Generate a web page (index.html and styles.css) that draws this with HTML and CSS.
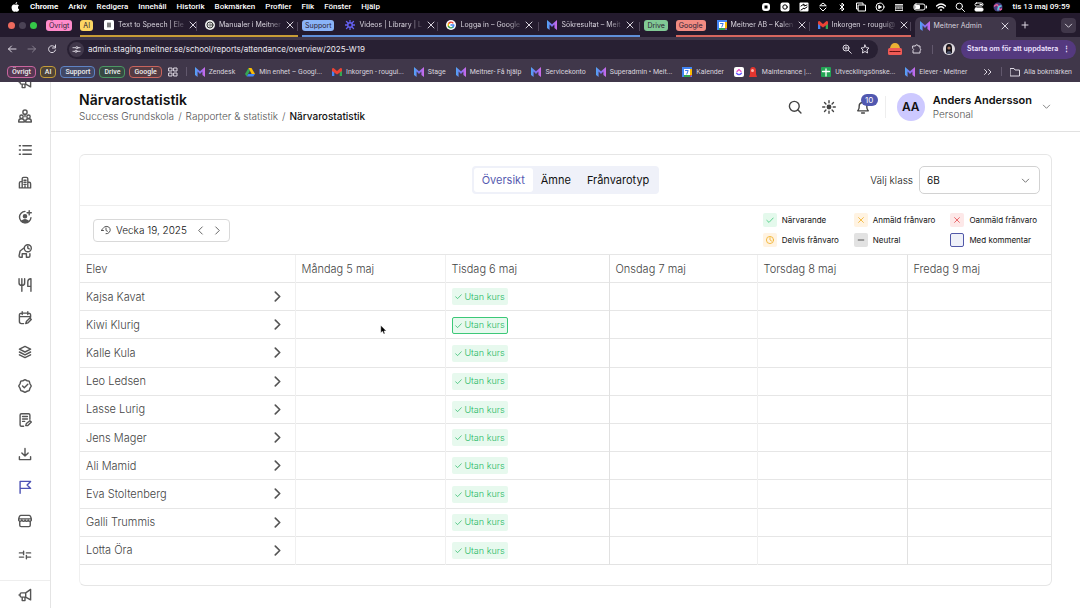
FILE: index.html
```html
<!DOCTYPE html>
<html lang="sv">
<head>
<meta charset="utf-8">
<title>Meitner Admin</title>
<link rel="stylesheet" href="styles.css">
</head>
<body>
<svg class="defs" aria-hidden="true">
  <defs>
    <linearGradient id="mg" x1="0" x2="1" y1="0" y2="0"><stop offset="0" stop-color="#4fa8f5"/><stop offset=".5" stop-color="#7d6cf0"/><stop offset="1" stop-color="#d06be8"/></linearGradient>
    <symbol id="m" viewBox="0 0 10 10"><path fill="url(#mg)" d="M0 0l5 4.300L10 0v10L7.400 8V4.600L5 7 2.600 4.600V10L0 8z"/></symbol>
    <symbol id="x" viewBox="0 0 10 10"><path d="M2 2l6 6M8 2L2 8"/></symbol>
    <symbol id="gmail" viewBox="0 0 10 10"><path fill="#4285f4" d="M0 2h2.300v7H0z"/><path fill="#34a853" d="M7.700 2H10v7H7.700z"/><path fill="#ea4335" d="M0 1.500l1.500-.5L5 4l3.500-3 1.500.5V4L5 7.500 0 4z"/></symbol>
    <symbol id="cal" viewBox="0 0 10 10"><path fill="#4285f4" d="M0 0h10v10H0z"/><path fill="#fbbc04" d="M8 2h2v6H8z"/><path fill="#34a853" d="M2 8h6v2H2z"/><path fill="#ea4335" d="M8 8h2L8 10z"/><path fill="#fff" d="M2 2h6v6H2z"/><path fill="none" stroke="#3b78e7" d="M3.500 3.500h2.700L4.800 7"/></symbol>
    <symbol id="right" viewBox="0 0 10 10"><path d="M3 1l4 4-4 4"/></symbol>
    <symbol id="down" viewBox="0 0 10 10"><path d="M1.500 3.500L5 7l3.500-3.500"/></symbol>
    <symbol id="check" viewBox="0 0 10 10"><path d="M1 5.500L3.800 8 9 2.500"/></symbol>
    <symbol id="horn" viewBox="0 0 20 20"><path d="M18 2v15l-7-4H5a2 2 0 01-2-2V9a2 2 0 012-2h6zM11 7v6M6 13v5h4v-5M3 10H1.500"/></symbol>
  </defs>
</svg>

<header class="browser">
  <nav class="menubar" aria-label="Menyrad">
    <svg class="apple" viewBox="0 0 10 12"><path fill="#fff" d="M7 0C5.700.2 5 1.300 5 2.500 6.200 2.500 7 1.300 7 0zM5 3.200C4 2.900 3 2.600 2 3.200c-3 1.800-1.500 7 .5 8.300.9.500 1.500-.2 2.500-.2s1.600.7 2.500.2C8.500 11 9 10 9.400 8.900 7.500 8 7.600 5.200 9.200 4.300 8 2.500 6 2.900 5 3.200z"/></svg>
    <b>Chrome</b><span>Arkiv</span><span>Redigera</span><span>Innehåll</span><span>Historik</span><span>Bokmärken</span><span>Profiler</span><span>Flik</span><span>Fönster</span><span>Hjälp</span>
    <div class="status">
      <svg viewBox="0 0 10 10"><rect x="1" y="1" width="8" height="8" rx="3" fill="#fff"/><rect x="3.500" y="3.500" width="3" height="3" fill="#000"/></svg>
      <svg viewBox="0 0 10 10"><rect x=".5" y=".5" width="9" height="9" rx="2" fill="#fff"/><circle cx="5" cy="5" r="2.200" fill="none" stroke="#000"/><circle cx="5" cy="5" r=".8"/></svg>
      <svg viewBox="0 0 10 10"><rect x=".5" y=".5" width="9" height="9" rx="1" fill="#fff"/><path d="M2 4l3-2v2l3-1M2 8l3-2v1l3-2" fill="none" stroke="#000"/></svg>
      <svg class="ln" viewBox="0 0 10 10"><path d="M2 3.500l3-2.500 3 2.500zM2 6l3 3 3-3"/></svg>
      <svg class="ln" viewBox="0 0 10 10"><path d="M3 3l4 4-2 2V1l2 2-4 4"/></svg>
      <svg class="ln" viewBox="0 0 10 10"><path d="M2 7H.5V1H7v1.500M2.500 3h7v6h-7z"/></svg>
      <svg class="ln" viewBox="0 0 10 10"><circle cx="5" cy="5" r="4"/><path fill="#fff" d="M4 3.500L6.500 5 4 6.500z"/></svg>
      <svg viewBox="0 0 10 10"><path fill="#ddd" d="M1 2h8v7H1z"/><path stroke="#222" d="M1 4h8M2 6h2M5 6h3M2 7.500h6"/></svg>
      <svg class="wide ln" viewBox="0 0 14 10"><rect x="1" y="2" width="11" height="6" rx="2"/><path fill="#fff" d="M2.500 3.500h4v3h-4zM13.500 4v2"/></svg>
      <svg class="ln" viewBox="0 0 10 10"><path d="M.5 4Q5 0 9.500 4M2.300 6Q5 3.500 7.700 6M4.500 8h1" stroke-width="1.400"/></svg>
      <svg class="ln" viewBox="0 0 10 10"><circle cx="4.300" cy="4.300" r="3.200"/><path d="M6.700 6.700L9.500 9.500"/></svg>
      <svg class="ln" viewBox="0 0 10 10"><rect x="1" y="1" width="8" height="3" rx="1.500"/><rect x="1" y="6" width="8" height="3" rx="1" fill="#fff"/><path d="M6 2.500h2"/></svg>
      <svg viewBox="0 0 10 10"><circle cx="5" cy="5" r="4.500" fill="#4b3d80"/><path d="M1.500 4q3-3 4 1t3 2" stroke="#e9609b" stroke-width="1.500" fill="none"/><path d="M5 8q0-4 3-4" stroke="#5fd3ea" stroke-width="1.500" fill="none"/></svg>
    </div>
    <time>tis 13 maj 09:59</time>
  </nav>

  <div class="tabstrip">
    <div class="lights"><i class="red"></i><i class="grey"></i><i class="green"></i></div>
    <button class="chip pink">Övrigt</button>
    <div class="group yellowline">
      <button class="chip yellow">AI</button>
      <div class="tab"><svg viewBox="0 0 10 10"><rect width="10" height="10" rx="1.500" fill="#fff"/><path stroke="#000" d="M4 3v4M6 3v4"/></svg><span>Text to Speech | Ele</span><button aria-label="Stäng"><svg><use href="#x"/></svg></button></div>
      <div class="tab"><svg viewBox="0 0 10 10"><circle cx="5" cy="5" r="5" fill="#eee"/><circle cx="5" cy="5" r="3" fill="none" stroke="#333"/><circle cx="5" cy="5" r="1.200" fill="none" stroke="#333" stroke-width=".6"/></svg><span>Manualer i Meitner</span><button aria-label="Stäng"><svg><use href="#x"/></svg></button></div>
    </div>
    <div class="group blueline">
      <button class="chip blue">Support</button>
      <div class="tab"><svg viewBox="0 0 10 10"><path stroke="#6460f0" stroke-width="1.300" d="M5 0v10M0 5h10M1.500 1.500l7 7M8.500 1.500l-7 7"/><circle cx="5" cy="5" r="3" fill="#6460f0"/><circle cx="5" cy="5" r="1.500" fill="#241b2e"/></svg><span>Videos | Library | L</span><button aria-label="Stäng"><svg><use href="#x"/></svg></button></div>
      <div class="tab"><svg viewBox="0 0 10 10"><circle cx="5" cy="5" r="5" fill="#fff"/><g fill="none" stroke-width="1.400"><path stroke="#ea4335" d="M2.500 3.700A2.900 2.900 0 017 2.900"/><path stroke="#fbbc04" d="M2.500 3.700a3 3 0 000 2.700"/><path stroke="#34a853" d="M2.500 6.400A2.900 2.900 0 007 7.100"/><path stroke="#4285f4" d="M7 7.100A3 3 0 007.900 5H5"/></g></svg><span>Logga in – Google</span><button aria-label="Stäng"><svg><use href="#x"/></svg></button></div>
      <div class="tab"><svg><use href="#m"/></svg><span>Sökresultat – Meit</span><button aria-label="Stäng"><svg><use href="#x"/></svg></button></div>
    </div>
    <button class="chip mint">Drive</button>
    <div class="group redline">
      <button class="chip coral">Google</button>
      <div class="tab"><svg><use href="#cal"/></svg><span>Meitner AB – Kalen</span><button aria-label="Stäng"><svg><use href="#x"/></svg></button></div>
      <div class="tab"><svg><use href="#gmail"/></svg><span>Inkorgen - rougui@</span><button aria-label="Stäng"><svg><use href="#x"/></svg></button></div>
    </div>
    <div class="tab active"><svg><use href="#m"/></svg><span>Meitner Admin</span><button aria-label="Stäng"><svg><use href="#x"/></svg></button></div>
    <button class="plus" aria-label="Ny flik"><svg class="ln" viewBox="0 0 10 10"><path d="M5 2v6M2 5h6"/></svg></button>
    <button class="more" aria-label="Sök bland flikar"><svg class="ln"><use href="#down"/></svg></button>
  </div>

  <div class="toolbar">
    <button aria-label="Bakåt"><svg class="ln" viewBox="0 0 10 10"><path d="M9 5H1.500M4.500 2l-3 3 3 3"/></svg></button>
    <button class="dim" aria-label="Framåt"><svg class="ln" viewBox="0 0 10 10"><path d="M1 5h7.500M5.500 2l3 3-3 3"/></svg></button>
    <button aria-label="Läs in igen"><svg class="ln" viewBox="0 0 10 10"><path d="M8 3.200A3.500 3.500 0 108.500 6M8.500 1v3h-3"/></svg></button>
    <div class="omnibox">
      <span class="site"><svg class="ln" viewBox="0 0 10 10"><path d="M1 3h3M7 3h2M1 7h2M6 7h3"/><circle cx="5.500" cy="3" r="1.200"/><circle cx="4.500" cy="7" r="1.200"/></svg></span>
      <input type="text" aria-label="Adress" value="admin.staging.meitner.se/school/reports/attendance/overview/2025-W19">
      <svg class="ln" viewBox="0 0 10 10"><circle cx="4" cy="4" r="3"/><path d="M6.300 6.300L9.300 9.300M2.700 4h2.600M4 2.700v2.600"/></svg>
      <svg class="ln" viewBox="0 0 10 10"><path d="M5 1l1.200 2.700 2.800.3L7 6l.6 3L5 7.500 2.400 9 3 6 1 4l2.800-.3z"/></svg>
    </div>
    <svg class="ext" viewBox="0 0 14 13"><path fill="#edb234" d="M2 5q1-5 5-5t5 5z"/><rect y="5" width="14" height="7" rx="1.500" fill="#ef5a55"/><path stroke="#611" stroke-width="1.200" stroke-dasharray="2 .8" d="M2 8.500h10"/></svg>
    <svg class="ln puzzle" viewBox="0 0 10 10"><path d="M1 2h2.500a1.200 1.200 0 012.500 0H8v2.500a1.200 1.200 0 010 2.200V9H1V6.500a1.200 1.200 0 000-2z"/></svg>
    <i class="sep"></i>
    <svg class="face" viewBox="0 0 12 12"><circle cx="6" cy="6" r="6" fill="#ddd9de"/><path fill="#17131a" d="M3 10V5q0-4 3-4t3 4v5z"/><circle cx="6" cy="5" r="1.600" fill="#a87b63"/><path fill="#4a5068" d="M3.500 11q0-3 2.500-3t2.500 3z"/></svg>
    <button class="restart">Starta om för att uppdatera <span>⋮</span></button>
  </div>

  <nav class="bookmarks" aria-label="Bokmärken">
    <button class="ochip opink">Övrigt</button><button class="ochip oyellow">AI</button><button class="ochip oblue">Support</button><button class="ochip ogreen">Drive</button><button class="ochip ored">Google</button>
    <svg class="ln" viewBox="0 0 10 10"><path d="M1 1h3v3H1zM6 1h3v3H6zM1 6h3v3H1zM6 6h3v3H6z"/></svg>
    <i class="sep"></i>
    <a href="#"><svg><use href="#m"/></svg>Zendesk</a>
    <a href="#"><svg viewBox="0 0 10 10"><path fill="#34a853" d="M3.500 1L0 7l1.700 2.500L5 3.500z"/><path fill="#fbbc04" d="M3.500 1h3L10 7H6.700z"/><path fill="#4285f4" d="M3.300 7H10L8.300 9.500H1.700z"/></svg>Min enhet – Googl...</a>
    <a href="#"><svg><use href="#gmail"/></svg>Inkorgen - rougui...</a>
    <a href="#"><svg><use href="#m"/></svg>Stage</a>
    <a href="#"><svg><use href="#m"/></svg>Meitner- Få hjälp</a>
    <a href="#"><svg><use href="#m"/></svg>Servicekonto</a>
    <a href="#"><svg><use href="#m"/></svg>Superadmin • Meit...</a>
    <a href="#"><svg><use href="#cal"/></svg>Kalender</a>
    <a href="#"><svg viewBox="0 0 10 10"><rect width="10" height="10" rx="2" fill="#fff"/><path d="M3 4.500l2-2 2 2" stroke="#e952c8" fill="none" stroke-width="1.300"/><path d="M2.500 6.300q2.500 2.700 5 0" stroke="#6b5cff" fill="none" stroke-width="1.300"/></svg><svg viewBox="0 0 10 10"><path fill="#e3352f" d="M2 7V4q0-4 3-4t3 4v3l1 3H1z"/><circle cx="4.500" cy="3.500" r="1.500" fill="#ffb3a8"/></svg>Maintenance |...</a>
    <a href="#"><svg viewBox="0 0 10 10"><rect width="10" height="10" rx="1" fill="#23a455"/><path stroke="#fff" stroke-width="1.300" d="M5 2v7M1.500 4.500h7"/></svg>Utvecklingsönske...</a>
    <a href="#"><svg><use href="#m"/></svg>Elever - Meitner</a>
    <button class="all" aria-label="Fler bokmärken"><svg class="ln" viewBox="0 0 10 10"><path d="M1.500 2.500L4 5 1.500 7.500M5.500 2.500L8 5 5.500 7.500"/></svg></button>
    <i class="sep"></i>
    <a href="#"><svg class="ln" viewBox="0 0 10 10"><path d="M.5 1.500H4l1 1.500h4.500v6h-9z"/></svg>Alla bokmärken</a>
  </nav>
</header>

<div class="app">
  <aside class="side">
    <nav class="icons" aria-label="Meny">
      <a href="#" aria-label="Anslag"><svg><use href="#horn"/></svg></a>
      <a href="#" aria-label="Grupper"><svg viewBox="0 0 20 20"><circle cx="10" cy="4.500" r="3"/><circle cx="5" cy="11" r="2.400"/><circle cx="15" cy="11" r="2.400"/><path d="M1 18.500v-1q0-3.500 4-3.500t4 3.500v1H1zM11 18.500v-1q0-3.500 4-3.500t4 3.500v1h-8zM10 8v3"/></svg></a>
      <a href="#" aria-label="Lista"><svg viewBox="0 0 20 20"><path d="M7 4h12M7 10h12M7 16h12M2 4h1.500M2 10h1.500M2 16h1.500"/></svg></a>
      <a href="#" aria-label="Skola"><svg viewBox="0 0 20 20"><path d="M6 17V4q0-2 2-2h4q2 0 2 2v13M6 8H4q-2 0-2 2v7h16v-6q0-2-2-2h-2M8.500 6h3M8.500 9h3M8.500 12h3M10 14v3"/></svg></a>
      <a href="#" aria-label="Ny person"><svg viewBox="0 0 20 20"><path d="M10 2a8.200 8.200 0 108.500 9M16 1v6M13 4h6"/><circle cx="10" cy="9" r="2.300" fill="#555"/><path fill="#555" d="M5 16q5-4 10 0-5 4-10 0z"/></svg></a>
      <a href="#" aria-label="Fritids"><svg viewBox="0 0 20 20"><path d="M8 6L3 10l-1.500 7q0 2 2 2H6v-5h6v5h3q2 0 2-2v-3"/><circle cx="14" cy="6" r="5"/><path d="M14 3v3l2 1"/></svg></a>
      <a href="#" aria-label="Måltider"><svg viewBox="0 0 20 20"><path d="M1.500 1v6q0 3.500 4 3.500t4-3.500V1M5.500 1v18M18.500 19V1q-4.500 0-4.500 5v6h4"/></svg></a>
      <a href="#" aria-label="Schema"><svg viewBox="0 0 20 20"><path d="M8 18H5q-3 0-3-3V6q0-3 3-3h10q3 0 3 3v3M2 8h16M6 1v4M14 1v4M11 18l1-3 5-5 2 2-5 5z"/></svg></a>
      <a href="#" aria-label="Kurser"><svg viewBox="0 0 20 20"><path d="M10 2l8 4-8 4-8-4zM2 10l8 4 8-4M2 14l8 4 8-4"/></svg></a>
      <a href="#" aria-label="Godkänt"><svg viewBox="0 0 20 20"><path d="M10 1l3 1.500 3 .5 1 3.500L19 10l-2 3.500-1 3-3 1-3 1.500-3-1.500-3-1-1-3L1 10l2-3.500L4 3l3-.5zM6.500 10l2.500 2.500L14 7.500"/></svg></a>
      <a href="#" aria-label="Anteckningar"><svg viewBox="0 0 20 20"><path d="M8 19H5q-2 0-2-2V3q0-2 2-2h10q2 0 2 2v6M6.500 5h7M6.500 8.500h7M6.500 12h3M11 18l1-3 5-4 2 2-5 5z"/></svg></a>
      <a href="#" aria-label="Ladda ner"><svg viewBox="0 0 20 20"><path d="M10 2v11M5.500 8.500L10 13l4.500-4.500M2 14v4h16v-4"/></svg></a>
      <a href="#" aria-label="Rapporter" class="on"><svg viewBox="0 0 20 20"><path d="M3 19V2h15l-5 5 5 5H3"/></svg></a>
      <a href="#" aria-label="Butik"><svg viewBox="0 0 20 20"><path d="M4 2h12q2 0 3 5v2q-2 3-4.500 0-2 3-4.500 0-2 3-4.500 0Q3 12 1 9V7q1-5 3-5zM1 7h18M2.500 11v5q0 2 2 2h11q2 0 2-2v-5"/></svg></a>
      <a href="#" aria-label="Inställningar"><svg viewBox="0 0 20 20"><path d="M2 7h6M12 7h6M2 13h6M12 13h6M8 4.500v5M12 10.500v5"/></svg></a>
    </nav>
    <a href="#" class="foot" aria-label="Nyheter"><svg><use href="#horn"/></svg></a>
  </aside>

  <div class="content">
    <header class="top">
      <div class="heading">
        <h1>Närvarostatistik</h1>
        <nav class="crumbs" aria-label="Brödsmulor"><a href="#">Success Grundskola</a><i>/</i><a href="#">Rapporter &amp; statistik</a><i>/</i><b>Närvarostatistik</b></nav>
      </div>
      <div class="actions">
        <button aria-label="Sök"><svg viewBox="0 0 20 20"><circle cx="9" cy="9" r="7"/><path d="M14 14l4.500 4.500"/></svg></button>
        <button aria-label="Ljust läge"><svg viewBox="0 0 20 20"><circle cx="10" cy="10" r="2.500" fill="#444"/><path d="M10 1v3M10 16v3M1 10h3M16 10h3M3.600 3.600l2 2M14.400 14.400l2 2M16.400 3.600l-2 2M5.600 14.400l-2 2"/></svg></button>
        <button class="bell" aria-label="Aviseringar"><svg viewBox="0 0 20 20"><path d="M2.500 15.500q2-2 2-5V9q0-5.500 5.500-5.500T15.500 9v1.500q0 3 2 5zM8 18.500h4"/></svg><em>10</em></button>
      </div>
      <button class="user"><span class="avatar">AA</span><span class="who"><b>Anders Andersson</b><small>Personal</small></span><svg><use href="#down"/></svg></button>
    </header>

    <main>
      <section class="card">
        <div class="filters">
          <div></div>
          <div class="segments" role="tablist"><button role="tab" class="sel" aria-selected="true">Översikt</button><button role="tab">Ämne</button><button role="tab">Frånvarotyp</button></div>
          <div class="klass"><label for="klass">Välj klass</label><span class="pick"><select id="klass"><option>6B</option></select><svg><use href="#down"/></svg></span></div>
        </div>
        <div class="period">
          <div class="week">
            <svg viewBox="0 0 20 20"><path d="M5 5.500A7.500 7.500 0 1110 17.500M10 6v5l3 1.500M1 11h4M3 7.500L1 11"/></svg>
            <span>Vecka 19, 2025</span>
            <button class="flip" aria-label="Föregående vecka"><svg><use href="#right"/></svg></button>
            <button aria-label="Nästa vecka"><svg><use href="#right"/></svg></button>
          </div>
          <ul class="legend">
            <li><i class="ok"><svg><use href="#check"/></svg></i>Närvarande</li>
            <li><i class="warn"><svg><use href="#x"/></svg></i>Anmäld frånvaro</li>
            <li><i class="bad"><svg><use href="#x"/></svg></i>Oanmäld frånvaro</li>
            <li><i class="warn"><svg viewBox="0 0 10 10"><circle cx="5" cy="5" r="4.500"/><path d="M5 2v3l2 1.300"/></svg></i>Delvis frånvaro</li>
            <li><i class="neutral"><svg viewBox="0 0 10 10"><path d="M1.500 5h7"/></svg></i>Neutral</li>
            <li><i class="note"></i>Med kommentar</li>
          </ul>
        </div>
        <table>
          <colgroup><col class="c1"><col class="c2"><col class="c3"><col class="c4"><col class="c5"><col class="c6"></colgroup>
          <thead><tr><th>Elev</th><th>Måndag 5 maj</th><th>Tisdag 6 maj</th><th>Onsdag 7 maj</th><th>Torsdag 8 maj</th><th>Fredag 9 maj</th></tr></thead>
          <tbody>
            <tr><td><a href="#">Kajsa Kavat<svg><use href="#right"/></svg></a></td><td></td><td><span class="tag"><svg><use href="#check"/></svg>Utan kurs</span></td><td></td><td></td><td></td></tr>
            <tr><td><a href="#">Kiwi Klurig<svg><use href="#right"/></svg></a></td><td></td><td><span class="tag noted"><svg><use href="#check"/></svg>Utan kurs</span></td><td></td><td></td><td></td></tr>
            <tr><td><a href="#">Kalle Kula<svg><use href="#right"/></svg></a></td><td></td><td><span class="tag"><svg><use href="#check"/></svg>Utan kurs</span></td><td></td><td></td><td></td></tr>
            <tr><td><a href="#">Leo Ledsen<svg><use href="#right"/></svg></a></td><td></td><td><span class="tag"><svg><use href="#check"/></svg>Utan kurs</span></td><td></td><td></td><td></td></tr>
            <tr><td><a href="#">Lasse Lurig<svg><use href="#right"/></svg></a></td><td></td><td><span class="tag"><svg><use href="#check"/></svg>Utan kurs</span></td><td></td><td></td><td></td></tr>
            <tr><td><a href="#">Jens Mager<svg><use href="#right"/></svg></a></td><td></td><td><span class="tag"><svg><use href="#check"/></svg>Utan kurs</span></td><td></td><td></td><td></td></tr>
            <tr><td><a href="#">Ali Mamid<svg><use href="#right"/></svg></a></td><td></td><td><span class="tag"><svg><use href="#check"/></svg>Utan kurs</span></td><td></td><td></td><td></td></tr>
            <tr><td><a href="#">Eva Stoltenberg<svg><use href="#right"/></svg></a></td><td></td><td><span class="tag"><svg><use href="#check"/></svg>Utan kurs</span></td><td></td><td></td><td></td></tr>
            <tr><td><a href="#">Galli Trummis<svg><use href="#right"/></svg></a></td><td></td><td><span class="tag"><svg><use href="#check"/></svg>Utan kurs</span></td><td></td><td></td><td></td></tr>
            <tr><td><a href="#">Lotta Öra<svg><use href="#right"/></svg></a></td><td></td><td><span class="tag"><svg><use href="#check"/></svg>Utan kurs</span></td><td></td><td></td><td></td></tr>
          </tbody>
        </table>
      </section>
    </main>
  </div>
</div>
<svg class="pointer" viewBox="0 0 7 11"><path d="M.5.5v8l2-1.500 1.200 3 1.500-.6L4 6.500h2.500z" fill="#000" stroke="#fff" stroke-width=".5"/></svg>
</body>
</html>
```
FILE: styles.css
```css
* { box-sizing: border-box; }
body { margin: 0; height: 100vh; display: flex; flex-direction: column; overflow: hidden; background: #fff; color: #111; font: 11px/16px Inter, "Liberation Sans", sans-serif; }
button, input, select { font: inherit; color: inherit; border: 0; background: none; padding: 0; margin: 0; }
a { color: inherit; text-decoration: none; }
i, em { font-style: normal; }
svg { fill: none; stroke-linecap: round; stroke-linejoin: round; flex: none; display: block; }
.defs { width: 0; height: 0; position: absolute; }

/* Browser frame */
.browser { flex: none; font-size: 7px; line-height: 12px; color: #d9d4de; background: #40374a; }
.browser svg { width: 10px; height: 10px; }
.ln { stroke: #ddd8e2; stroke-width: 1; }
.sep { width: 1px; height: 9px; background: #62586d; }

.menubar { height: 13px; background: #000; color: #fff; display: flex; align-items: center; gap: 10px; padding: 0 10px 0 11px; font-family: Roboto, sans-serif; font-size: 8px; font-weight: 500; white-space: nowrap; }
.menubar b { font-weight: 700; }
.menubar .apple { width: 9px; }
.status { margin-left: auto; display: flex; gap: 9px; }
.browser .status .wide { width: 14px; }
.status .ln { stroke: #fff; }

.tabstrip { height: 24px; background: #241b2e; display: flex; align-items: stretch; padding: 0 4px 0 8px; }
.lights { display: flex; gap: 4px; align-items: center; margin-right: 9px; }
.lights i { width: 7px; height: 7px; border-radius: 50%; }
.lights .red { background: #ed6a5e; }
.lights .grey { background: #4b4355; }
.lights .green { background: #35c748; }
.chip { height: 11px; line-height: 11px; align-self: center; padding: 0 3px; border-radius: 3px; color: #2a2032; flex: none; }
.group .chip { margin-right: 3px; }
.pink { background: #ff8bcb; margin-right: 8px; }
.yellow { background: #fdd663; }
.blue { background: #8ab4f8; }
.mint { background: #81c995; margin-right: 8px; }
.coral { background: #f28b82; }
.group { display: flex; flex: 0 1 auto; min-width: 0; border-bottom: 2px solid; padding-top: 2px; margin-right: 4px; }
.yellowline { border-color: #c79c36; }
.blueline { border-color: #5f8fd8; }
.redline { border-color: #d6665e; }
.tab { flex: 0 1 auto; width: 101px; min-width: 0; display: flex; align-items: center; gap: 4px; padding: 0 5px 0 8px; position: relative; }
.tab span { flex: 1; white-space: nowrap; mask-image: linear-gradient(90deg, #000 80%, #0003); }
.tab button { width: 10px; }
.tab button svg { stroke: #d9d4de; }
.tab:not(.active)::after { content: ""; position: absolute; right: 0; top: 7px; height: 9px; width: 1px; background: #4f4559; }
.active { background: #40374a; border-radius: 6px 6px 0 0; margin: 4px 0 0; padding: 0 6px 3px 5px; }
.active span { mask: none; }
.plus { width: 18px; padding: 0 4px; }
.more { align-self: center; width: 15px; height: 15px; border-radius: 4px; background: #40374a; margin-left: auto; padding: 3px; }
.browser .more svg { width: 9px; height: 9px; }

.toolbar { height: 24px; padding: 0 4px 0 7px; display: flex; align-items: center; gap: 10px; }
.toolbar .dim { opacity: .45; }
.omnibox { flex: 1; height: 19px; border-radius: 10px; background: #282033; display: flex; align-items: center; gap: 8px; padding: 0 8px 0 2px; }
.omnibox input { flex: 1; min-width: 0; font-size: 8px; color: #eeebf2; outline: 0; }
.site { width: 15px; height: 15px; border-radius: 50%; background: #40374a; padding: 3px; margin-right: -4px; }
.browser .site svg { width: 9px; height: 9px; }
.browser .ext { width: 14px; height: 13px; }
.browser .face { width: 12px; height: 12px; }
.restart { height: 19px; border-radius: 10px; background: #54397f; color: #efe4ff; font-weight: 600; padding: 0 6px; margin-left: -4px; white-space: nowrap; }
.restart span { margin-left: 3px; }

.bookmarks { height: 21px; display: flex; align-items: center; gap: 10px; padding: 0 8px 0 7px; white-space: nowrap; font-family: Roboto, sans-serif; }
.bookmarks a { display: flex; align-items: center; gap: 4px; }
.bookmarks .sep { margin: 0 -2px; }
.bookmarks .all { margin-left: auto; }
.ochip { height: 12px; line-height: 10px; border: 1px solid; border-radius: 4px; padding: 0 4px; margin-right: -6px; color: #eee; font-weight: 500; }
.ochip + svg { margin-left: 2px; }
.opink { border-color: #c9659f; background: #573753; }
.oyellow { border-color: #c39b39; background: #4f4437; }
.oblue { border-color: #5f83c4; background: #414765; }
.ogreen { border-color: #4c9763; background: #374843; }
.ored { border-color: #c8645d; background: #553b43; }

/* Application */
.app { flex: 1; min-height: 0; display: flex; }
.side { flex: none; width: 51px; border-right: 1px solid #e4e4e4; display: flex; flex-direction: column; overflow: hidden; }
.side svg { width: 14px; height: 14px; stroke: #555; stroke-width: 2; }
.icons { flex: 1; min-height: 0; margin-top: -10px; padding-bottom: 15px; display: flex; flex-direction: column; align-items: center; justify-content: space-between; }
.icons a { height: 20px; display: flex; align-items: center; }
.side .on svg { stroke: #4c52b5; }
.foot { height: 28px; border-top: 1px solid #eee; display: grid; place-items: center; }
.content { flex: 1; min-width: 0; display: flex; flex-direction: column; }

.top { height: 50px; flex: none; border-bottom: 1px solid #e1e1e1; display: flex; align-items: center; padding: 0 29px 0 28px; }
.heading { flex: 1; }
h1 { margin: 0; font-size: 14px; line-height: 18px; font-weight: 600; }
.crumbs { font-size: 10px; line-height: 14px; font-weight: 300; color: #555; display: flex; gap: 4px; }
.crumbs b { color: #111; font-weight: 500; }
.actions { display: flex; gap: 20px; padding-right: 15px; border-right: 1px solid #eee; height: 22px; align-items: center; }
.actions svg { width: 14px; height: 14px; stroke: #444; stroke-width: 2; }
.bell { position: relative; }
.bell em { position: absolute; left: 5px; top: -6px; height: 12px; width: 17px; border-radius: 6px; background: #5158b0; color: #fff; font-size: 8px; line-height: 12px; }
.user { display: flex; align-items: center; text-align: left; margin-left: 11px; }
.avatar { width: 28px; height: 28px; border-radius: 50%; background: #cdc9ff; font-size: 12px; line-height: 28px; font-weight: 600; text-align: center; }
.who { display: flex; flex-direction: column; margin: 0 10px 0 8px; }
.who b { font-size: 11px; line-height: 14px; font-weight: 600; }
.who small { font-size: 10px; line-height: 14px; font-weight: 300; color: #555; }
.user svg { width: 9px; height: 9px; stroke: #777; }

main { padding: 22px 28px; }
.card { border: 1px solid #e6e6e6; border-left-color: #f0f0f0; border-radius: 6px; padding-bottom: 20px; }
.filters { display: grid; grid-template-columns: 1fr auto 1fr; align-items: center; height: 51px; padding: 0 11px; border-bottom: 1px solid #eee; }
.segments { display: flex; background: #eff1f9; border-radius: 4px; padding: 2px; }
.segments button { height: 24px; font-size: 11px; padding: 0 8px; border-radius: 3px; }
.segments .sel { background: #fff; color: #565bb0; }
.klass { display: flex; justify-content: flex-end; align-items: center; gap: 6px; font-size: 10px; font-weight: 300; }
.pick { display: grid; align-items: center; width: 121px; }
.pick > * { grid-area: 1 / 1; }
.pick select { appearance: none; height: 28px; border: 1px solid #d2d2d2; border-radius: 5px; padding: 0 7px; font-size: 10px; font-weight: 400; background: #fff; }
.pick svg { justify-self: end; margin-right: 10px; width: 9px; height: 9px; stroke: #666; }
.period { display: flex; justify-content: space-between; align-items: center; height: 48px; padding: 0 14px 0 13px; }
.week { display: flex; align-items: center; height: 23px; border: 1px solid #d9d9d9; border-radius: 4px; padding: 0 7px; font-size: 10px; font-weight: 300; }
.week > svg { width: 10px; height: 10px; stroke: #555; stroke-width: 2; margin-right: 5px; }
.week span { margin-right: 9px; }
.week button + button { margin-left: 8px; }
.week button svg { width: 9px; height: 9px; stroke: #555; }
.flip { transform: scaleX(-1); }
.legend { list-style: none; margin: 0; padding: 0; display: grid; grid-template-columns: repeat(3, auto); gap: 6px 15px; font-size: 8px; line-height: 14px; }
.legend li { display: flex; align-items: center; gap: 5px; }
.legend i { width: 14px; height: 14px; border-radius: 2px; display: grid; place-items: center; }
.legend svg { width: 8px; height: 8px; stroke: currentColor; }
.ok { background: #e4f9ec; color: #3cc878; }
.warn { background: #fff3e2; color: #f0ae22; }
.bad { background: #fde8e8; color: #e5484d; }
.neutral { background: #e2e2e2; color: #333; }
.note { border: 1px solid #5158a8; background: #eff1f9; }

table { width: 100%; height: 311px; border-collapse: collapse; table-layout: fixed; border-bottom: 1px solid #e3e3e3; }
.c1 { width: 215px; } .c2 { width: 150px; } .c3 { width: 164px; } .c4 { width: 148px; } .c5 { width: 150px; } .c6 { width: 144px; }
th, td { height: 28px; padding: 0 6px; text-align: left; font-weight: 300; color: #444; border-top: 1px solid #e6e6e6; border-left: 1px solid #f0f0f0; }
th:first-child, td:first-child { border-left: 0; }
th:nth-child(4), td:nth-child(4), th:nth-child(6), td:nth-child(6) { border-left-color: #e1e1e1; }
td a { display: flex; justify-content: space-between; align-items: center; padding-right: 6px; }
td a svg { width: 11px; height: 11px; stroke: #555; stroke-width: 1.5; }
.tag { display: inline-flex; align-items: center; gap: 3px; height: 17px; padding: 0 3px; border-radius: 2px; font-size: 9px; font-weight: 300; background: #e7f9ee; color: #22b863; vertical-align: middle; }
.tag svg { width: 7px; height: 7px; stroke: currentColor; stroke-width: 1; }
.noted { outline: 1px solid #3cc878; outline-offset: -1px; }
.pointer { position: absolute; left: 380px; top: 325px; width: 7px; height: 10px; }
```
